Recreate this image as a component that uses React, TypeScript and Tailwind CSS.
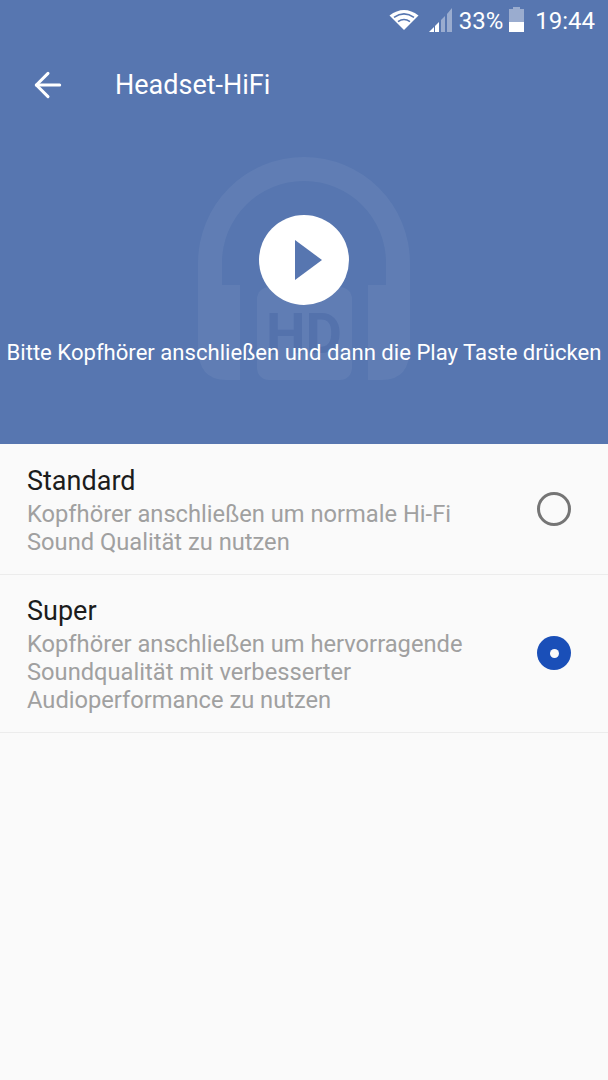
import { ArrowLeft } from "lucide-react";

const roboto = "[font-family:Roboto,'Noto_Sans',sans-serif]";

function StatusIcons() {
  return (
    <div className="flex h-[42px] items-center justify-end pr-[13px] text-white">
      <svg width="30" height="22" viewBox="0 0 30 22" className="mr-[10px] mb-[2px]">
        <path d="M15 21 L0.5 6.5 Q15 -4.5 29.5 6.5 Z" fill="#ffffff" />
        <path d="M5 8.4 Q15 1.4 25 8.4" fill="none" stroke="#5776b0" strokeWidth="1.6" />
        <path d="M9 12.6 Q15 8.4 21 12.6" fill="none" stroke="#5776b0" strokeWidth="1.6" />
      </svg>
      <svg width="24" height="26" viewBox="0 0 24 26" className="mr-[6px] mt-[-2px]">
        <path d="M0 25 L5 20 V25 Z" fill="#ffffff" />
        <path d="M6 19 L10 15 V25 H6 Z" fill="#ffffff" />
        <path d="M12 13 L16 9 V25 H12 Z" fill="#ffffff" fillOpacity="0.4" />
        <path d="M18 7 L23 1 V25 H18 Z" fill="#ffffff" fillOpacity="0.4" />
      </svg>
      <span className="text-[24px] leading-none">33%</span>
      <svg width="17" height="26" viewBox="0 0 17 26" className="ml-[5px] mr-[10px] mt-[-3px]">
        <path d="M5 0 H12 V2 H16 V25 H1 V2 H5 Z" fill="#ffffff" fillOpacity="0.4" />
        <path d="M1 15 H16 V25 H1 Z" fill="#ffffff" />
      </svg>
      <span className="text-[24px] leading-none">19:44</span>
    </div>
  );
}

function HeadphoneArt() {
  return (
    <svg
      width="212"
      height="224"
      viewBox="0 0 212 224"
      className="absolute left-[198px] top-[157px]"
    >
      <g fill="#ffffff" fillOpacity="0.055">
        <path d="M0 128 V106 A106 106 0 0 1 212 106 V128 H188 V106 A82 82 0 0 0 24 106 V128 Z" />
        <path d="M0 128 H42 V223 H28 Q0 223 0 190 Z" />
        <path d="M212 128 H170 V223 H184 Q212 223 212 190 Z" />
        <rect x="59" y="130" width="95" height="93" rx="12" />
      </g>
      <text
        x="106"
        y="196"
        textAnchor="middle"
        fontFamily="Roboto, sans-serif"
        fontWeight="700"
        fontSize="56"
        fill="#5472ac"
      >
        HD
      </text>
    </svg>
  );
}

function Radio({ checked }: { checked: boolean }) {
  return checked ? (
    <div className="flex h-[34px] w-[34px] shrink-0 items-center justify-center rounded-full bg-[#1a4fb8]">
      <div className="h-[9px] w-[9px] rounded-full bg-[#fafafa]" />
    </div>
  ) : (
    <div className="h-[34px] w-[34px] shrink-0 rounded-full border-[3px] border-[#757575]" />
  );
}

function Option({
  title,
  lines,
  checked,
  radioClass,
  rowClass,
}: {
  title: string;
  lines: string[];
  checked: boolean;
  radioClass: string;
  rowClass: string;
}) {
  return (
    <div className={`flex justify-between border-b border-[#ececec] pl-[27px] pr-[37px] ${rowClass}`}>
      <div>
        <div className="text-[27px] leading-[32px] text-[#1c1c1c]">{title}</div>
        <div className="mt-[3px] text-[23.7px] leading-[28px] text-[#a0a0a0]">
          {lines.map((line) => (
            <div key={line}>{line}</div>
          ))}
        </div>
      </div>
      <div className={radioClass}>
        <Radio checked={checked} />
      </div>
    </div>
  );
}

export default function App() {
  return (
    <div className={`relative flex h-[1080px] w-[608px] flex-col overflow-hidden bg-[#fafafa] ${roboto}`}>
      <header className="relative h-[444px] shrink-0 bg-[#5776b0] text-white">
        <HeadphoneArt />
        <div className="relative">
          <StatusIcons />
          <div className="flex h-[86px] items-center pl-[28px]">
            <ArrowLeft size={40} strokeWidth={3} absoluteStrokeWidth />
            <span className="ml-[47px] text-[27px] leading-none">Headset-HiFi</span>
          </div>
          <div className="mt-[87px] flex flex-col items-center">
            <div className="flex h-[90px] w-[90px] items-center justify-center rounded-full bg-white">
              <svg width="27" height="40" viewBox="0 0 27 40" className="ml-[9px]">
                <path d="M0 0 L27 20 L0 40 Z" fill="#5776b0" />
              </svg>
            </div>
            <p className="mt-[33px] whitespace-nowrap text-[22.1px] leading-[28px]">
              Bitte Kopfhörer anschließen und dann die Play Taste drücken
            </p>
          </div>
        </div>
      </header>
      <Option
        title="Standard"
        lines={["Kopfhörer anschließen um normale Hi-Fi", "Sound Qualität zu nutzen"]}
        checked={false}
        rowClass="h-[131px] pt-[21px]"
        radioClass="pt-[27px]"
      />
      <Option
        title="Super"
        lines={[
          "Kopfhörer anschließen um hervorragende",
          "Soundqualität mit verbesserter",
          "Audioperformance zu nutzen",
        ]}
        checked
        rowClass="h-[158px] pt-[20px]"
        radioClass="pt-[41px]"
      />
    </div>
  );
}
